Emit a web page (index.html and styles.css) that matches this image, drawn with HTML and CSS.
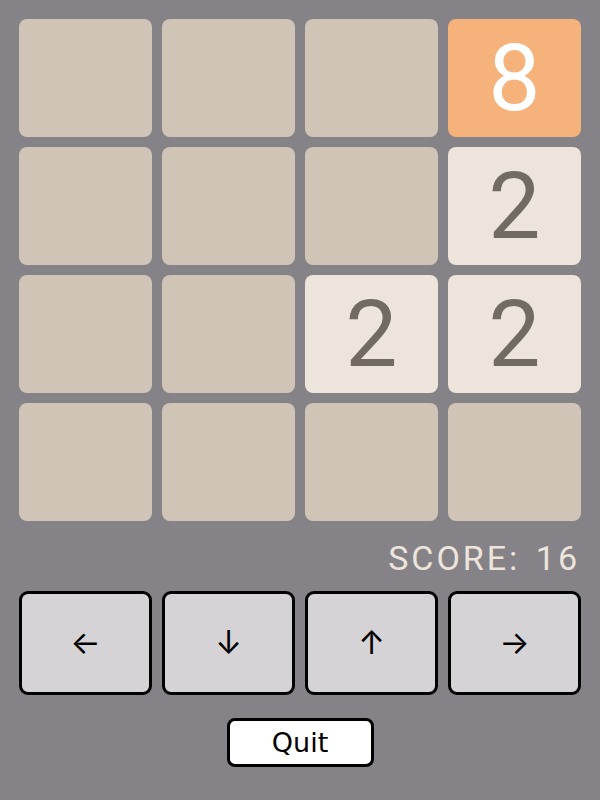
FILE: index.html
```html
<!DOCTYPE html>
<html>
<head>
<meta charset="utf-8">
<link rel="stylesheet" href="styles.css">
</head>
<body>
<div class="app">
  <div class="board">
    <div class="tile"></div>
    <div class="tile"></div>
    <div class="tile"></div>
    <div class="tile t8">8</div>
    <div class="tile"></div>
    <div class="tile"></div>
    <div class="tile"></div>
    <div class="tile t2">2</div>
    <div class="tile"></div>
    <div class="tile"></div>
    <div class="tile t2">2</div>
    <div class="tile t2">2</div>
    <div class="tile"></div>
    <div class="tile"></div>
    <div class="tile"></div>
    <div class="tile"></div>
  </div>
  <div class="score">SCORE: 16</div>
  <div class="controls">
    <button class="btn">←</button>
    <button class="btn">↓</button>
    <button class="btn">↑</button>
    <button class="btn">→</button>
  </div>
  <div class="quit-row">
    <button class="quit">Quit</button>
  </div>
</div>
</body>
</html>
```
FILE: styles.css
```css
html, body {
  margin: 0;
  padding: 0;
  background: #858387;
}
.app {
  width: 600px;
  height: 800px;
  box-sizing: border-box;
  padding: 19px;
  display: flex;
  flex-direction: column;
  font-family: Roboto, sans-serif;
}
.board {
  display: grid;
  grid-template-columns: repeat(4, 133px);
  grid-auto-rows: 118px;
  gap: 10px;
}
.tile {
  background: #cfc4b6;
  border-radius: 8px;
  display: flex;
  align-items: center;
  justify-content: center;
  font-size: 93px;
  line-height: 1;
}
.t2 {
  background: #ede5dc;
  color: #716b62;
}
.t8 {
  background: #f6b27b;
  color: #ffffff;
}
.score {
  margin-top: 15px;
  height: 55px;
  text-align: right;
  font-size: 34px;
  line-height: 44px;
  letter-spacing: 3px;
  word-spacing: 4px;
  color: #ede5dc;
  margin-right: 1px;
}
.controls {
  display: grid;
  grid-template-columns: repeat(4, 133px);
  gap: 10px;
}
.btn {
  height: 104px;
  box-sizing: border-box;
  border: 3px solid #000;
  border-radius: 9px;
  background: #d5d3d6;
  padding: 0;
  font-family: Inter, "DejaVu Sans", sans-serif;
  font-size: 32px;
  line-height: 1;
  color: #000;
}
.quit-row {
  display: flex;
  justify-content: center;
  margin-top: 23px;
}
.quit {
  width: 147px;
  height: 49px;
  box-sizing: border-box;
  border: 3px solid #000;
  border-radius: 8px;
  background: #fff;
  font-family: "DejaVu Sans", sans-serif;
  font-size: 27px;
  color: #000;
  padding: 0;
}
```
